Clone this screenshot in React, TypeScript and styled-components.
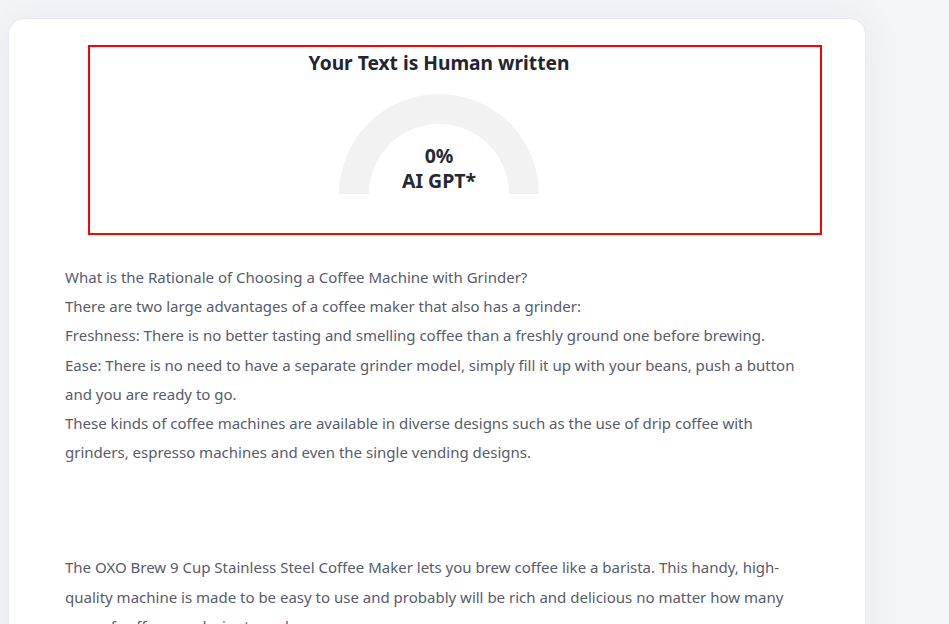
import React from "react";
import styled, { createGlobalStyle } from "styled-components";

const Global = createGlobalStyle`
  html, body { margin: 0; padding: 0; }
  body {
    background: #f4f5f7;
    font-family: "Noto Sans", "Open Sans", sans-serif;
    overflow: hidden;
  }
`;

const Page = styled.div`
  padding: 18px 0 0 8px;
  height: 624px;
  box-sizing: border-box;
  overflow: hidden;
`;

const Card = styled.div`
  width: 858px;
  min-height: 700px;
  box-sizing: border-box;
  background: #ffffff;
  border: 1px solid #e6e7f1;
  border-radius: 16px;
  box-shadow: 0 0 40px rgba(30, 35, 60, 0.06);
  padding: 26px 0 0 0;
`;

const ResultBox = styled.div`
  margin-left: 79px;
  width: 734px;
  height: 190px;
  box-sizing: border-box;
  border: 2px solid #ff0000;
  display: flex;
`;

const ResultInner = styled.div`
  width: 698px;
  display: flex;
  flex-direction: column;
  align-items: center;
`;

const Title = styled.h2`
  margin: 3px 0 0;
  font-size: 19.2px;
  line-height: 26px;
  font-weight: 700;
  color: #22252f;
`;

const Gauge = styled.div`
  position: relative;
  width: 200px;
  height: 100px;
  margin-top: 18px;
`;

const GaugeLabel = styled.div`
  position: absolute;
  left: 0;
  right: 0;
  bottom: 1px;
  text-align: center;
  font-size: 19.5px;
  font-weight: 700;
  line-height: 25px;
  color: #262833;
`;

const Body = styled.div`
  padding: 28px 56px 0 56px;
`;

const Para = styled.p<{ $gap?: number }>`
  margin: 0 0 ${(p) => p.$gap ?? 0}px;
  font-size: 15px;
  line-height: 29.2px;
  color: #565b6d;
`;

export default function App() {
  return (
    <>
      <Global />
      <Page>
        <Card>
          <ResultBox>
            <ResultInner>
              <Title>Your Text is Human written</Title>
              <Gauge>
                <svg width="200" height="100" viewBox="0 0 200 100">
                  <path
                    d="M0 100 A100 100 0 0 1 200 100 L170 100 A70 70 0 0 0 30 100 Z"
                    fill="#f2f2f2"
                  />
                </svg>
                <GaugeLabel>
                  0%
                  <br />
                  AI GPT*
                </GaugeLabel>
              </Gauge>
            </ResultInner>
          </ResultBox>
          <Body>
            <Para>What is the Rationale of Choosing a Coffee Machine with Grinder?</Para>
            <Para>There are two large advantages of a coffee maker that also has a grinder:</Para>
            <Para>
              Freshness: There is no better tasting and smelling coffee than a freshly ground one before brewing.
            </Para>
            <Para>
              Ease: There is no need to have a separate grinder model, simply fill it up with your beans, push a button
              and you are ready to go.
            </Para>
            <Para $gap={86}>
              These kinds of coffee machines are available in diverse designs such as the use of drip coffee with
              grinders, espresso machines and even the single vending designs.
            </Para>
            <Para>
              The OXO Brew 9 Cup Stainless Steel Coffee Maker lets you brew coffee like a barista. This handy, high-
              quality machine is made to be easy to use and probably will be rich and delicious no matter how many
              cups of coffee you desire to make.
            </Para>
          </Body>
        </Card>
      </Page>
    </>
  );
}
